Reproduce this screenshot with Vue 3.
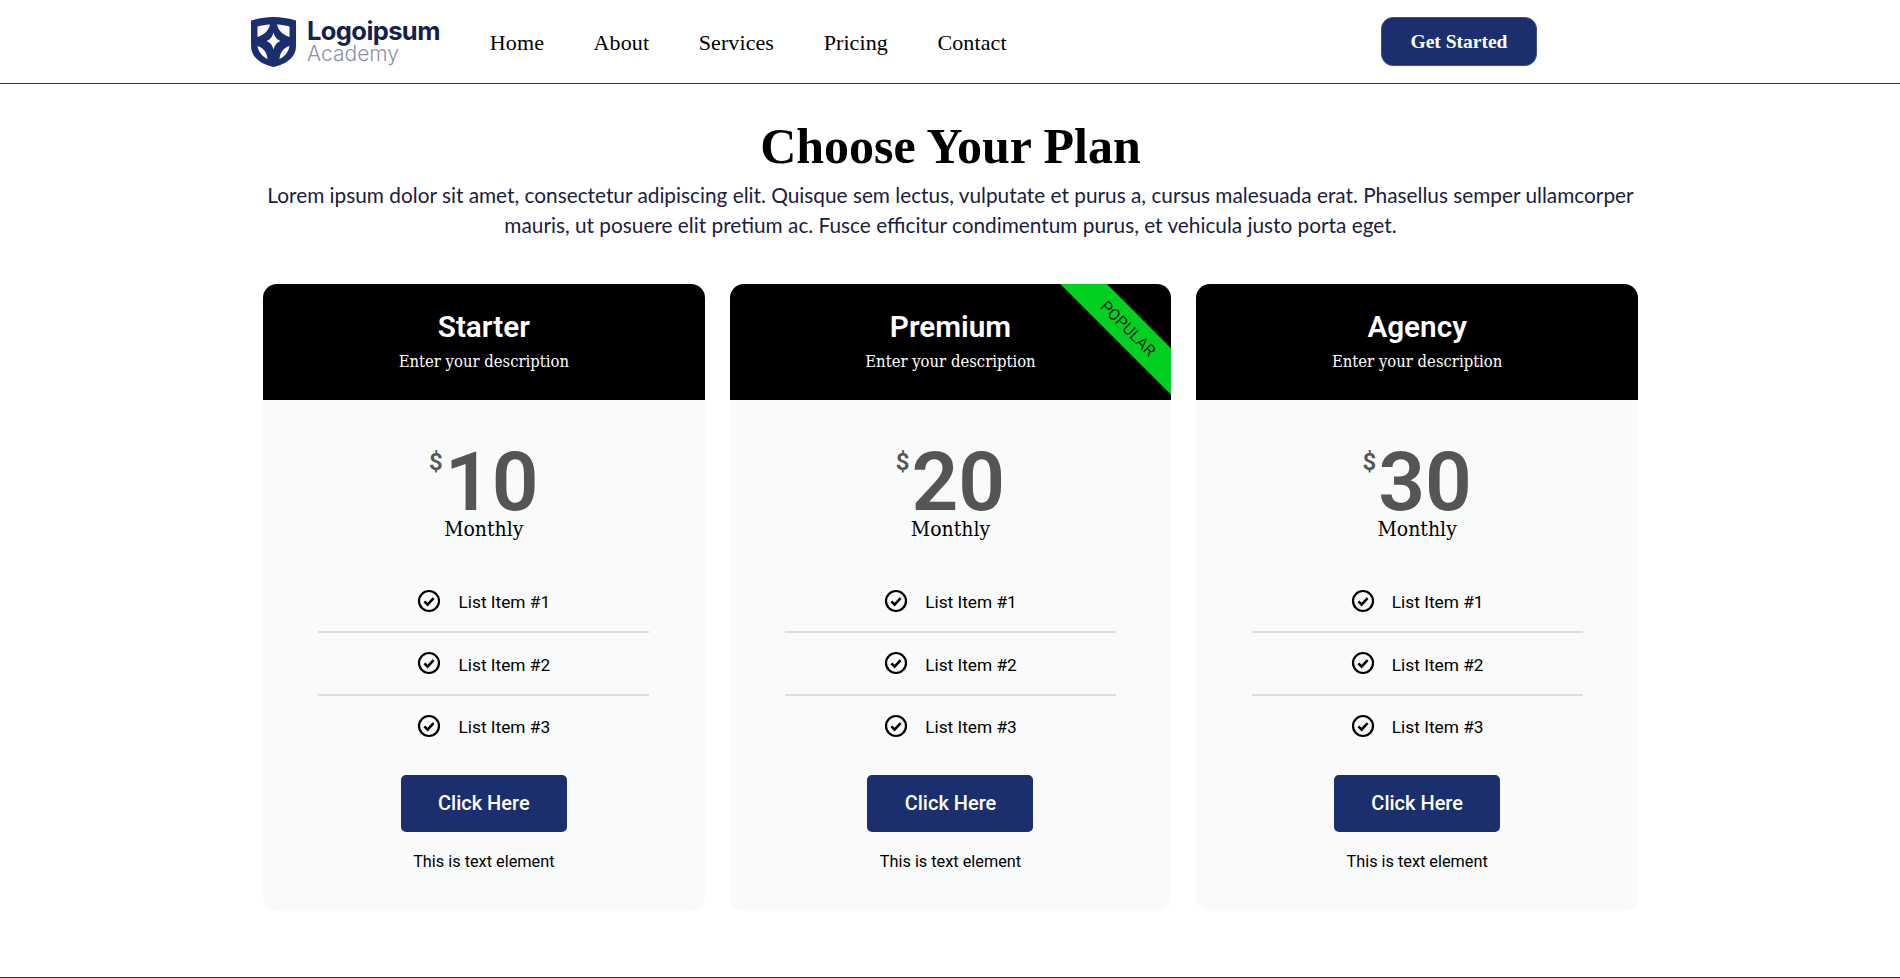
<template>
  <div class="page">
    <header class="topbar">
      <div class="topbar-inner">
        <a class="logo" href="#">
          <svg class="logo-mark" viewBox="0 0 45 50" width="45" height="50">
            <path fill="#1b2f6e" d="M22.5 0C30 0 38 1.2 45 3.6V29C45 41 34 47.5 22.5 50 11 47.5 0 41 0 29V3.6C7 1.2 15 0 22.5 0Z" />
            <path fill="#fff" d="M22.5 15.5c1 4 3 7 6.8 8.5-3.800 1.500-5.800 4.500-6.800 8.500-1-4-3-7-6.800-8.500 3.800-1.500 5.800-4.500 6.800-8.500Z" />
            <path fill="#fff" d="M6.500 9.500c4-1 8-1.700 12.500-2-1 5.500-5.500 10-12.500 12.500Z" />
            <path fill="#fff" d="M38.500 9.500c-4-1-8-1.700-12.500-2 1 5.500 5.500 10 12.500 12.500Z" />
            <path fill="#fff" d="M6.500 29c5.500 1.500 9.500 6 10 13-5.500-2.500-9-7-10-13Z" />
            <path fill="#fff" d="M38.500 29c-5.500 1.500-9.500 6-10 13 5.500-2.500 9-7 10-13Z" />
          </svg>
          <span class="logo-text">
            <span class="logo-name">Logoipsum</span>
            <span class="logo-sub">Academy</span>
          </span>
        </a>
        <nav class="menu">
          <a v-for="link in links" :key="link" href="#">{{ link }}</a>
        </nav>
        <button class="cta" type="button">Get Started</button>
      </div>
    </header>

    <main class="pricing">
      <h1>Choose Your Plan</h1>
      <p class="intro">
        Lorem ipsum dolor sit amet, consectetur adipiscing elit. Quisque sem lectus, vulputate et purus a, cursus malesuada erat. Phasellus semper ullamcorper mauris, ut posuere elit pretium ac. Fusce efficitur condimentum purus, et vehicula justo porta eget.
      </p>

      <div class="plans">
        <section v-for="plan in plans" :key="plan.name" class="plan">
          <div class="plan-head">
            <h2>{{ plan.name }}</h2>
            <p>Enter your description</p>
            <span v-if="plan.popular" class="ribbon">POPULAR</span>
          </div>
          <div class="plan-body">
            <div class="price">
              <span class="currency">$</span>
              <span class="amount">{{ plan.price }}</span>
            </div>
            <div class="period">Monthly</div>
            <ul class="features">
              <li v-for="n in 3" :key="n">
                <svg viewBox="0 0 24 24" width="24" height="24">
                  <circle cx="12" cy="12" r="10" fill="none" stroke="#000" stroke-width="2.2" />
                  <path d="M7.4 12.400l3.200 3.200 6-6.400" fill="none" stroke="#000" stroke-width="2.600" />
                </svg>
                <span>List Item #{{ n }}</span>
              </li>
            </ul>
            <a class="plan-btn" href="#">Click Here</a>
            <p class="note">This is text element</p>
          </div>
        </section>
      </div>
    </main>

    <div class="bottom-line"></div>
  </div>
</template>

<script setup>
const links = ['Home', 'About', 'Services', 'Pricing', 'Contact']

const plans = [
  { name: 'Starter', price: 10 },
  { name: 'Premium', price: 20, popular: true },
  { name: 'Agency', price: 30 }
]
</script>

<style>
html,
body {
  margin: 0;
  background: #fff;
}
</style>

<style scoped>
.page {
  height: 978px;
  display: flex;
  flex-direction: column;
  overflow: hidden;
  font-family: Roboto, sans-serif;
  color: #000;
}

.topbar {
  height: 83px;
  border-bottom: 1px solid #333;
  flex: none;
}

.topbar-inner {
  height: 100%;
  padding: 0 363px 0 251px;
  display: flex;
  align-items: center;
}

.logo {
  display: flex;
  align-items: center;
  gap: 11px;
  text-decoration: none;
}

.logo-text {
  display: flex;
  flex-direction: column;
  margin-top: -2px;
  font-family: Inter, sans-serif;
}

.logo-name {
  font-size: 25.5px;
  line-height: 25px;
  font-weight: 700;
  letter-spacing: -0.6px;
  color: #14214d;
}

.logo-sub {
  font-size: 21px;
  line-height: 21px;
  font-weight: 300;
  color: #8a92ab;
}

.menu {
  display: flex;
  gap: 49.6px;
  margin-left: 50px;
  margin-top: 2px;
}

.menu a {
  font-family: "Liberation Serif", serif;
  font-size: 22px;
  letter-spacing: 0.1px;
  color: #000;
  text-decoration: none;
}

.cta {
  margin-left: auto;
  width: 156px;
  height: 49px;
  border: 1px solid #3a4f8c;
  border-radius: 12px;
  background: #1b2f6e;
  color: #fff;
  font-family: "Liberation Serif", serif;
  font-size: 19.5px;
  font-weight: 700;
}

.pricing {
  flex: 1;
  padding: 0 262px 0 263px;
}

h1 {
  margin: 31px 0 0;
  text-align: center;
  font-family: "Liberation Serif", serif;
  font-size: 50px;
  line-height: 62px;
  font-weight: 700;
}

.intro {
  margin: 3px auto 0;
  max-width: 1375px;
  text-align: center;
  font-family: Lato, sans-serif;
  font-size: 20.8px;
  line-height: 30px;
  color: #1a2040;
}

.plans {
  margin-top: 44px;
  display: grid;
  grid-template-columns: repeat(3, 1fr);
  gap: 25px;
}

.plan {
  border-radius: 14px;
  overflow: hidden;
  background: #f9fafa;
}

.plan-head {
  position: relative;
  height: 116px;
  overflow: hidden;
  box-sizing: border-box;
  padding-top: 25px;
  background: #000;
  color: #fff;
  text-align: center;
}

.plan-head h2 {
  margin: 0;
  font-size: 29.7px;
  line-height: 36px;
  font-weight: 600;
}

.plan-head p {
  margin: 6px 0 0;
  font-family: "DejaVu Serif", serif;
  font-stretch: condensed;
  font-size: 16.5px;
  line-height: 22px;
}

.ribbon {
  position: absolute;
  top: 27.5px;
  right: -57px;
  width: 200px;
  height: 33px;
  line-height: 33px;
  transform: rotate(45deg);
  background: #00d01f;
  color: #222;
  font-size: 16px;
  text-align: center;
}

.plan-body {
  height: 511px;
  box-sizing: border-box;
  padding-top: 49px;
  display: flex;
  flex-direction: column;
  align-items: center;
}

.price {
  display: flex;
  align-items: flex-start;
  color: #555;
  height: 66px;
}

.currency {
  font-size: 24px;
  font-weight: 600;
  line-height: 28px;
  margin: -1px 2px 0 0;
}

.amount {
  font-size: 82px;
  line-height: 66px;
  font-weight: 600;
}

.period {
  margin-top: 1px;
  font-family: "DejaVu Serif", serif;
  font-stretch: condensed;
  font-size: 21px;
  line-height: 26px;
}

.features {
  list-style: none;
  margin: 28.5px 0 0;
  padding: 0;
  width: 331px;
}

.features li {
  box-sizing: border-box;
  height: 62.5px;
  border-bottom: 2px solid #dcdddd;
  display: flex;
  align-items: center;
  justify-content: center;
  gap: 17px;
  font-size: 17.3px;
}

.features li span {
  padding-top: 3px;
}

.features li:last-child {
  border-bottom-color: transparent;
}

.plan-btn {
  margin-top: 17px;
  width: 166px;
  height: 57px;
  line-height: 57px;
  border-radius: 5px;
  background: #1b2f6e;
  color: #fff;
  font-size: 20px;
  font-weight: 500;
  text-align: center;
  text-decoration: none;
}

.note {
  margin: 19px 0 0;
  font-size: 16.3px;
  line-height: 22px;
}

.bottom-line {
  flex: none;
  height: 1px;
  background: #333;
}
</style>
